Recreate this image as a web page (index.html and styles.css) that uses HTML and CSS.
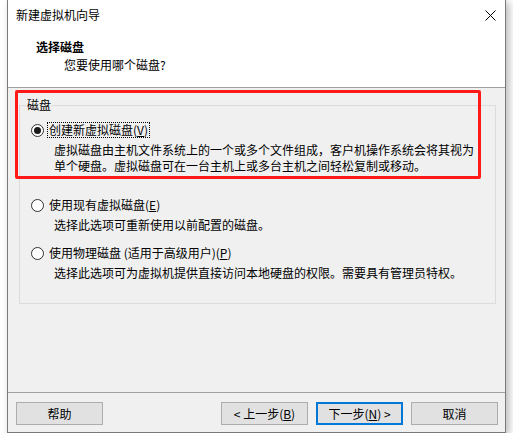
FILE: index.html
```html
<!DOCTYPE html>
<html lang="zh-CN">
<head>
<meta charset="utf-8">
<title>新建虚拟机向导</title>
<link rel="stylesheet" href="styles.css">
</head>
<body>
<div class="window">
  <div class="titlebar">
    <span class="title">新建虚拟机向导</span>
    <svg class="close" width="11" height="11" viewBox="0 0 11 11"><path d="M0.5 0.5 L10.5 10.5 M10.5 0.5 L0.5 10.5" stroke="#000" stroke-width="1" fill="none"/></svg>
  </div>
  <div class="header">
    <div class="h-title">选择磁盘</div>
    <div class="h-sub">您要使用哪个磁盘?</div>
  </div>
  <div class="content">
    <fieldset class="group">
      <legend class="legend">磁盘</legend>
      <div class="option first">
        <div class="row">
          <span class="radio checked"></span>
          <span class="label focus">创建新虚拟磁盘(<u>V</u>)</span>
        </div>
        <div class="desc">虚拟磁盘由主机文件系统上的一个或多个文件组成，客户机操作系统会将其视为<br>单个硬盘。虚拟磁盘可在一台主机上或多台主机之间轻松复制或移动。</div>
      </div>
      <div class="option second">
        <div class="row">
          <span class="radio"></span>
          <span class="label">使用现有虚拟磁盘(<u>E</u>)</span>
        </div>
        <div class="desc">选择此选项可重新使用以前配置的磁盘。</div>
      </div>
      <div class="option third">
        <div class="row">
          <span class="radio"></span>
          <span class="label">使用物理磁盘 (适用于高级用户)(<u>P</u>)</span>
        </div>
        <div class="desc">选择此选项可为虚拟机提供直接访问本地硬盘的权限。需要具有管理员特权。</div>
      </div>
    </fieldset>
  </div>
  <div class="footer">
    <button class="btn">帮助</button>
    <span class="spacer"></span>
    <button class="btn">&lt; 上一步(<u>B</u>)</button>
    <button class="btn default">下一步(<u>N</u>) &gt;</button>
    <button class="btn">取消</button>
  </div>
  <div class="highlight"></div>
</div>
</body>
</html>
```
FILE: styles.css
```css
html, body {
  margin: 0;
  padding: 0;
  background: #ffffff;
  overflow: hidden;
}
body {
  font-family: "Noto Sans CJK SC", "Noto Sans", sans-serif;
  font-size: 12px;
  line-height: 16px;
  color: #000;
}
.window {
  position: relative;
  box-sizing: border-box;
  margin: -1px 0 0 7px;
  width: 499px;
  height: 434px;
  border: 1px solid #7a7a7a;
  background: #f0f0f0;
  display: flex;
  flex-direction: column;
  box-shadow: 3px 3px 8px rgba(0, 0, 0, 0.28);
}
.titlebar {
  height: 32px;
  flex: none;
  background: #fff;
  display: flex;
  align-items: center;
  justify-content: space-between;
  padding: 0 9px 2px 8px;
  box-sizing: border-box;
}
.close {
  display: block;
  margin-top: 1px;
}
.header {
  height: 56px;
  flex: none;
  box-sizing: border-box;
  background: #fff;
  border-bottom: 1px solid #a0a0a0;
  padding: 7px 0 0 28px;
}
.h-title {
  font-weight: 700;
}
.h-sub {
  margin-top: 2px;
  padding-left: 28px;
}
.content {
  flex: 1;
  padding: 9px 9px 0 11px;
}
.group {
  margin: 0;
  padding: 0 0 22px 0;
  border: 1px solid #dcdcdc;
  min-width: 0;
}
.legend {
  margin-left: 6px;
  padding: 0 1px;
  line-height: 16px;
}
.option.first { margin-top: 9px; }
.option.second { margin-top: 23px; }
.option.third { margin-top: 12px; }
.row {
  display: flex;
  align-items: center;
  height: 16px;
  padding-left: 11px;
}
.radio {
  box-sizing: border-box;
  width: 13px;
  height: 13px;
  border: 1px solid #333;
  border-radius: 50%;
  background: #fff;
  position: relative;
  flex: none;
}
.radio.checked::after {
  content: "";
  position: absolute;
  left: 2px;
  top: 2px;
  width: 7px;
  height: 7px;
  border-radius: 50%;
  background: #1a1a1a;
}
.label {
  margin-left: 3px;
  padding: 0 1px;
  line-height: 14px;
  border: 1px solid transparent;
}
.label.focus {
  border: 1px dotted #000;
}
.desc {
  margin-top: 4px;
  padding-left: 34px;
}
.footer {
  height: 40px;
  flex: none;
  box-sizing: border-box;
  border-top: 1px solid #a0a0a0;
  padding: 9px 7px 0 8px;
  display: flex;
  align-items: flex-start;
  gap: 8px;
}
.spacer {
  flex: 1;
}
.btn {
  box-sizing: border-box;
  width: 87px;
  height: 23px;
  margin: 0;
  padding: 0;
  border: 1px solid #adadad;
  background: #e1e1e1;
  font-family: inherit;
  font-size: 12px;
  line-height: 16px;
  color: #000;
}
.btn.default {
  border: 2px solid #0078d7;
}
.highlight {
  position: absolute;
  left: 7px;
  top: 90px;
  width: 466px;
  height: 89px;
  box-sizing: border-box;
  border: 3px solid #ff1a1a;
  border-radius: 2px;
  pointer-events: none;
}
```
